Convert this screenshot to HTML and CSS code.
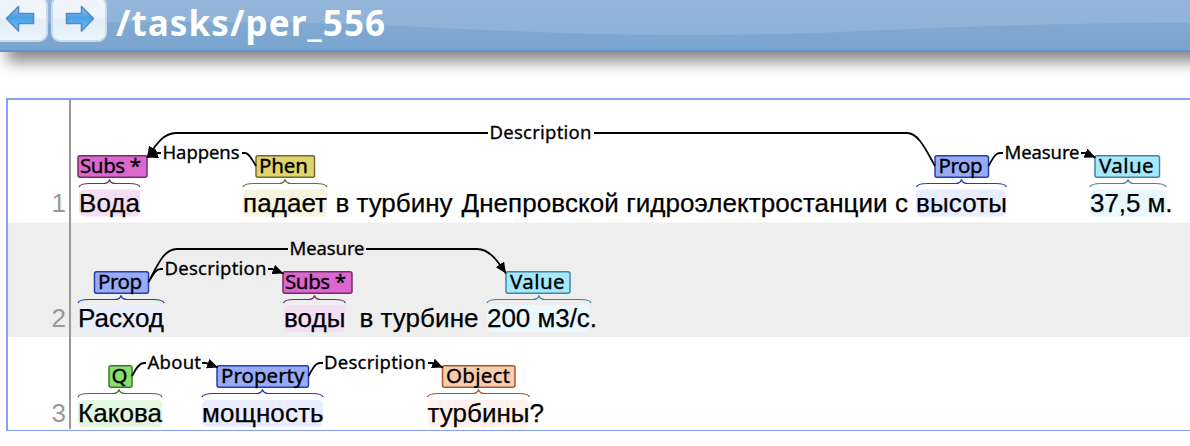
FILE: index.html
```html
<!DOCTYPE html>
<html lang="ru">
<head>
<meta charset="utf-8">
<title>/tasks/per_556</title>
<link rel="stylesheet" href="styles.css">
</head>
<body>
<header class="header">
  <svg class="wave" viewBox="0 0 1190 50" preserveAspectRatio="none" aria-hidden="true">
    <defs>
      <linearGradient id="waveLight" x1="0" y1="0" x2="0" y2="1"><stop offset="0" stop-color="#94b5d9"/><stop offset="1" stop-color="#8eb2d6"/></linearGradient>
    </defs>
    <path fill="url(#waveLight)" d="M0 0H1190V22.5C1080 23.5 1000 25 920 28.5C840 32 780 35 692 35C590 35 480 30 400 26C310 22 200 20.500 0 24Z"/>
  </svg>
  <nav class="nav">
    <button class="nav-btn nav-prev" aria-label="Previous">
      <svg width="30" height="28" viewBox="0 0 30 28"><path class="arrow" d="M1.500 13.500L13.500 1.500V8.500H28.500V18.500H13.500V26L1.500 13.500Z"/></svg>
    </button>
    <button class="nav-btn" aria-label="Next">
      <svg width="30" height="28" viewBox="0 0 30 28"><defs><linearGradient id="arrowFill" x1="0" y1="0" x2="0" y2="1"><stop offset="0" stop-color="#93c9f3"/><stop offset=".45" stop-color="#4a9fe6"/><stop offset="1" stop-color="#65c3fa"/></linearGradient></defs><path class="arrow" d="M28.500 13.500L16.500 1.500V8.500H1.500V18.500H16.500V26L28.500 13.500Z"/></svg>
    </button>
  </nav>
  <svg class="title" width="280" height="50" role="heading"><text x="2" y="35.500" textLength="269">/tasks/per_556</text></svg>
</header>
<main class="panel">
<svg class="doc" width="1182" height="330" viewBox="8 100 1182 330">
  <defs>
    <marker id="head" viewBox="0 0 11 10" refX="11" refY="5" markerWidth="11" markerHeight="10" markerUnits="userSpaceOnUse" orient="auto"><path d="M0 0L11 5L0 10Z"/></marker>
  </defs>
  <rect class="stripe" x="8" y="222.500" width="1182" height="114.500"/>
  <path class="gutter" d="M70 100V429"/>
  <g class="num"><text x="66" y="212">1</text><text x="66" y="327">2</text><text x="66" y="422">3</text></g>

  <g class="subs">
    <rect class="hl" x="79" y="189.500" width="61" height="27" rx="5"/><rect class="tag" x="78" y="155.800" width="69" height="21.500" rx="2"/>
    <path class="brace" d="M79 187q1-3.500 11-3.500h13.500q5 0 6-4q1 4 6 4h13.500q10 0 11 3.500"/>
    <rect class="hl" x="284" y="305" width="61" height="27" rx="5"/><rect class="tag" x="283" y="271.800" width="69" height="21.500" rx="2"/>
    <path class="brace" d="M283.500 303q1-3.500 11-3.500h14q5 0 6-4q1 4 6 4h14q10 0 11 3.500"/>
  </g>
  <g class="phen">
    <rect class="hl" x="243" y="189.500" width="84" height="27" rx="5"/><rect class="tag" x="256" y="155.800" width="58.500" height="21.500" rx="2"/>
    <path class="brace" d="M243 187q1-3.500 11-3.500h25q5 0 6-4q1 4 6 4h25q10 0 11 3.500"/>
  </g>
  <g class="prop">
    <rect class="hl" x="916" y="189.500" width="90" height="27" rx="5"/><rect class="tag" x="935" y="155.800" width="53.500" height="21.500" rx="2"/>
    <path class="brace" d="M916.500 187q1-3.500 11-3.500h28q5 0 6-4q1 4 6 4h28q10 0 11 3.500"/>
    <rect class="hl" x="79" y="305" width="85" height="27" rx="5"/><rect class="tag" x="94.500" y="271.800" width="54" height="21.500" rx="2"/>
    <path class="brace" d="M78 303q1-3.500 11-3.500h26q5 0 6-4q1 4 6 4h26q10 0 11 3.500"/>
    <rect class="hl" x="202" y="400" width="121" height="27" rx="5"/><rect class="tag" x="217" y="365.800" width="91.500" height="21.500" rx="2"/>
    <path class="brace" d="M202 397q1-3.500 11-3.500h43.500q5 0 6-4q1 4 6 4h43.500q10 0 11 3.500"/>
  </g>
  <g class="value">
    <rect class="hl" x="1090" y="189.500" width="76" height="27" rx="5"/><rect class="tag" x="1095" y="155.800" width="64.500" height="21.500" rx="2"/>
    <path class="brace" d="M1090 187q1-3.500 11-3.500h21q5 0 6-4q1 4 6 4h21q10 0 11 3.500"/>
    <rect class="hl" x="487" y="305" width="103" height="27" rx="5"/><rect class="tag" x="506" y="271.800" width="64" height="21.500" rx="2"/>
    <path class="brace" d="M487 303q1-3.500 11-3.500h35q5 0 6-4q1 4 6 4h35q10 0 11 3.500"/>
  </g>
  <g class="question">
    <rect class="hl" x="78" y="400" width="84" height="27" rx="5"/><rect class="tag" x="109" y="365.800" width="23" height="21.500" rx="2"/>
    <path class="brace" d="M78 397q1-3.500 11-3.500h24q5 0 6-4q1 4 6 4h26q10 0 11 3.500"/>
  </g>
  <g class="object">
    <rect class="hl" x="428" y="400" width="101" height="27" rx="5"/><rect class="tag" x="442.500" y="365.800" width="72.500" height="21.500" rx="2"/>
    <path class="brace" d="M427.500 397q1-3.500 11-3.500h34q5 0 6-4q1 4 6 4h34q10 0 11 3.500"/>
  </g>

  <g class="arc">
    <path d="M935 166C925 148 918 133 907 133H594"/>
    <path marker-end="url(#head)" d="M488 133H176C164 133 157 143 147 157.500"/>
    <path d="M256 166C251 158 249 153 245 153H242"/>
    <path marker-end="url(#head)" d="M161 153H158L147 157.500"/>
    <path d="M988.500 166C994 156 996 153 1000 153H1003"/>
    <path marker-end="url(#head)" d="M1081 153H1085L1095.500 157.500"/>
    <path d="M148.500 282C158 264 164 249 177 249H288"/>
    <path marker-end="url(#head)" d="M366 249H477C489 249 497 260 506 273.500"/>
    <path d="M148.500 282C154 273 156 269 161 269H163"/>
    <path marker-end="url(#head)" d="M268 269H272L283.500 273.500"/>
    <path d="M132 376C137 366 140 363 144 363H146"/>
    <path marker-end="url(#head)" d="M202 363H206L218 367.500"/>
    <path d="M308.500 376C314 366 316 363 320 363H323"/>
    <path marker-end="url(#head)" d="M428 363H432L443 367.500"/>
  </g>

  <g class="arc-label">
    <text x="489.500" y="139" textLength="102">Description</text>
    <text x="162.500" y="159" textLength="77">Happens</text>
    <text x="1004.500" y="159" textLength="75">Measure</text>
    <text x="289.500" y="255" textLength="75">Measure</text>
    <text x="164.500" y="275" textLength="102">Description</text>
    <text x="147.500" y="369" textLength="53.500">About</text>
    <text x="324" y="369" textLength="102">Description</text>
  </g>
  <g class="tag-label">
    <text x="80" y="173" textLength="61">Subs *</text>
    <text x="259" y="173" textLength="49">Phen</text>
    <text x="938.500" y="173" textLength="44">Prop</text>
    <text x="1099" y="173" textLength="54.500">Value</text>
    <text x="98" y="289" textLength="44">Prop</text>
    <text x="285" y="289" textLength="61">Subs *</text>
    <text x="510" y="289" textLength="54.500">Value</text>
    <text x="111.500" y="383">Q</text>
    <text x="221" y="383" textLength="83.500">Property</text>
    <text x="446" y="383" textLength="64">Object</text>
  </g>
  <g class="words">
    <text x="79" y="212" textLength="61">Вода</text>
    <text x="243" y="212" textLength="84">падает</text>
    <text x="335.500" y="212" textLength="117">в турбину</text>
    <text x="461.500" y="212" textLength="446.500">Днепровской гидроэлектростанции с</text>
    <text x="916" y="212" textLength="91">высоты</text>
    <text x="1090" y="212" textLength="82.500">37,5 м.</text>
    <text x="78" y="327" textLength="86">Расход</text>
    <text x="284" y="327" textLength="61.500">воды</text>
    <text x="359.500" y="327" textLength="119">в турбине</text>
    <text x="487" y="327" textLength="110">200 м3/с.</text>
    <text x="78" y="422" textLength="84">Какова</text>
    <text x="202" y="422" textLength="121.500">мощность</text>
    <text x="427.500" y="422" textLength="116.500">турбины?</text>
  </g>
</svg>
</main>
</body>
</html>
```
FILE: styles.css
```css
body {
  margin: 0;
  height: 446px;
  overflow: hidden;
  background: #fff;
  font-family: "Liberation Sans", Arial, sans-serif;
}
.header {
  position: relative;
  display: flex;
  align-items: flex-start;
  box-sizing: border-box;
  height: 52px;
  width: 1220px;
  border-bottom: 2px solid #5b94d6;
  background: linear-gradient(#85add3, #7aa5cf);
  box-shadow: 7px 10px 14px rgba(0, 0, 0, .46);
}
.wave {
  position: absolute;
  inset: 0;
  width: 1190px;
  height: 50px;
}
.nav {
  position: relative;
  display: flex;
  gap: 3px;
  margin-left: -8px;
}
.nav-btn {
  box-sizing: border-box;
  display: flex;
  align-items: center;
  justify-content: center;
  width: 56px;
  height: 46px;
  margin-top: -4px;
  padding: 0 0 0 1px;
  border: 2px solid #c7daed;
  border-radius: 9px;
  background: linear-gradient(#eff5fb 0 48%, #e3eef8 52%, #ecf4fb);
}
.nav-prev { padding: 0; }
.arrow {
  fill: url(#arrowFill);
  stroke: #5589c8;
  stroke-width: 1.6;
  stroke-linejoin: round;
}
.title {
  position: relative;
  margin-left: 7px;
  fill: #fff;
  font: bold 35px "Noto Sans", "Open Sans", sans-serif;
}
.panel {
  margin: 46px 0 0 6px;
  border: solid #869ff8;
  border-width: 2px 0 1px 2px;
}
.doc { display: block; }
.stripe { fill: #eee; }
.gutter { stroke: #999; stroke-width: 2; }
.num { fill: #999; font-size: 26px; text-anchor: end; }
.words { font-size: 26px; stroke: #000; stroke-width: .25; }
.tag-label { font: 20.5px "Noto Sans", sans-serif; stroke: #000; stroke-width: .35; }
.arc-label { font: 18.5px "Noto Sans", sans-serif; stroke: #000; stroke-width: .3; }
.arc { fill: none; stroke: #000; stroke-width: 1.8; }
#head path { fill: #000; stroke: none; }
.tag { stroke-width: 1.5; }
.brace { fill: none; stroke-width: 1.2; }
.subs .hl { fill: #f4def4; }
.subs .tag { fill: #dc67ce; stroke: #752a6f; }
.subs .brace { stroke: #752a6f; }
.phen .hl { fill: #f8f5df; }
.phen .tag { fill: #e2d46c; stroke: #746a2c; }
.phen .brace { stroke: #746a2c; }
.prop .hl { fill: #e8edff; }
.prop .tag { fill: #97abf9; stroke: #2440a5; }
.prop .brace { stroke: #2440a5; }
.value .hl { fill: #e9f8ff; }
.value .tag { fill: #a3e8fc; stroke: #4384a0; }
.value .brace { stroke: #4384a0; }
.question .hl { fill: #e3f6df; }
.question .tag { fill: #88df6d; stroke: #3a7a2c; }
.question .brace { stroke: #3a7a2c; }
.object .hl { fill: #fff1ec; }
.object .tag { fill: #f7cdaf; stroke: #a9542b; }
.object .brace { stroke: #a9542b; }
```
